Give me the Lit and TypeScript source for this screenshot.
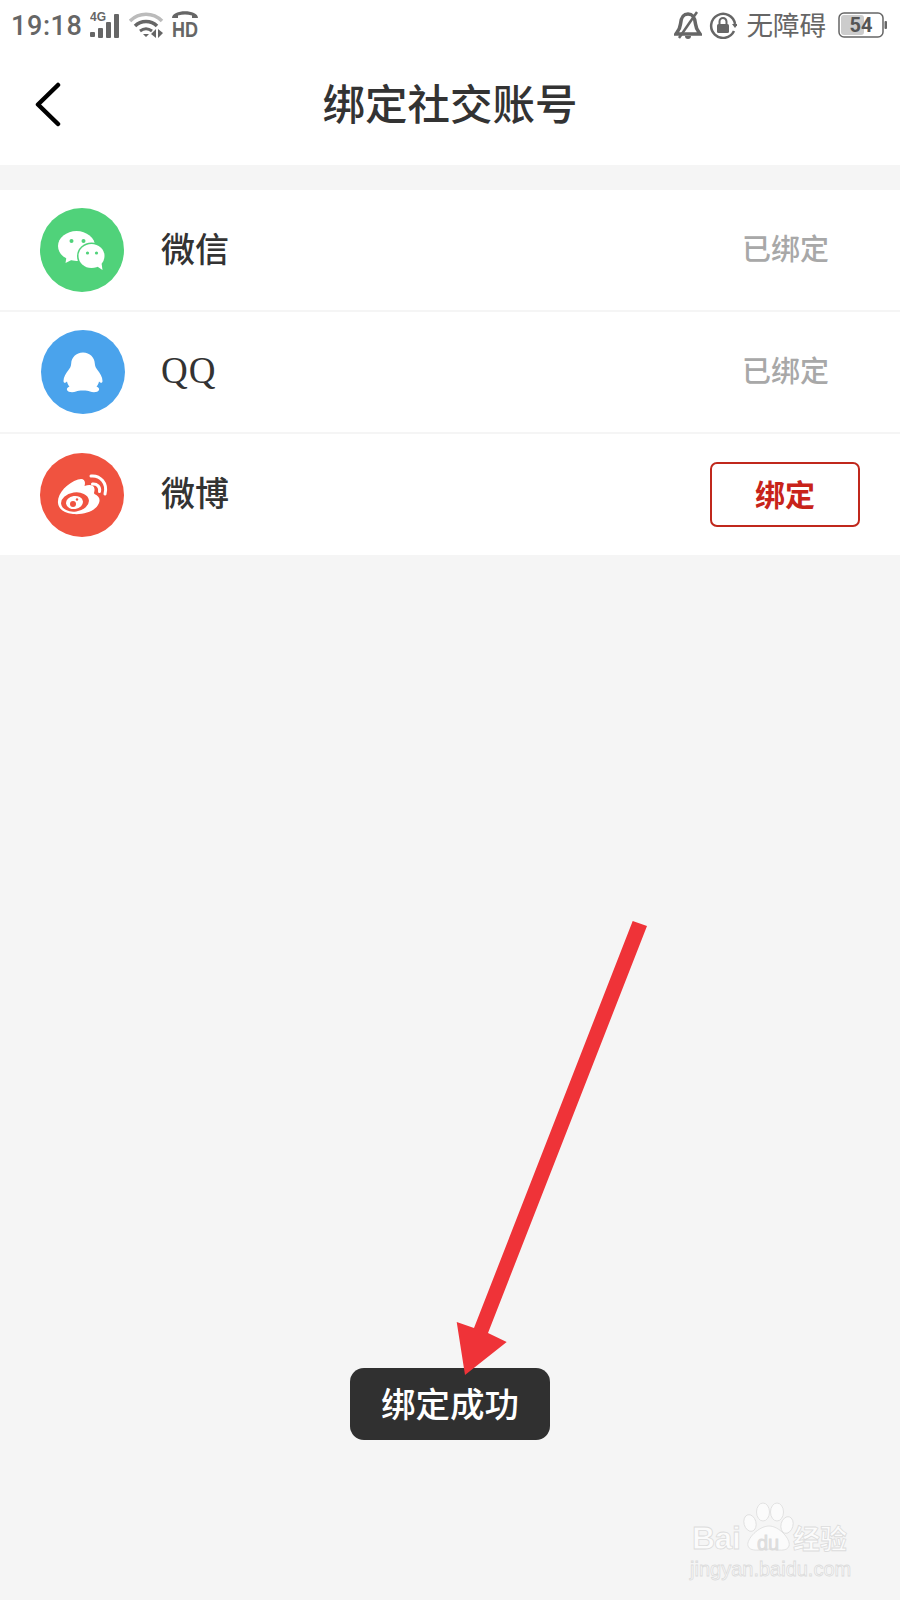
import { LitElement, html, css, svg } from "lit";
import { customElement } from "lit/decorators.js";

const wechat = svg`<svg class="ic" viewBox="0 0 84 84"><circle cx="42" cy="42" r="42" fill="#50d27a"/>
<g transform="translate(1.500 0)"><ellipse cx="35" cy="38" rx="18.500" ry="15" fill="#fff"/><path d="M25 49l-1 6 8-4z" fill="#fff"/>
<circle cx="30" cy="33" r="2" fill="#50d27a"/><circle cx="42" cy="33" r="2" fill="#50d27a"/>
<ellipse cx="50" cy="48" rx="14.500" ry="13.500" fill="#50d27a"/><ellipse cx="50" cy="48" rx="13" ry="12" fill="#fff"/>
<path d="M55 58l6 4-1-7z" fill="#fff"/><circle cx="46" cy="45" r="1.600" fill="#50d27a"/><circle cx="55" cy="45" r="1.600" fill="#50d27a"/></g></svg>`;

const qq = svg`<svg class="ic qq" viewBox="0 0 84 84"><circle cx="42" cy="42" r="42" fill="#4aa3ec"/>
<path d="M42 22.500C49 22.500 53.500 27.500 53.800 33.500C54 36.500 55 38 56.500 40C59 43 61.500 47 61.500 51C61.500 53 60 53.500 58 51.500C57.500 54 56.500 55.500 55.500 56.500C57.500 57.500 58.500 58.500 58 60C57 62.500 52 62.800 49 61.500C47 60.800 45.500 60.500 42 60.500C38.500 60.500 37 60.800 35 61.500C32 62.800 27 62.500 26 60C25.500 58.500 26.500 57.500 28.500 56.500C27.500 55.500 26.500 54 26 51.500C24 53.500 22.500 53 22.500 51C22.500 47 25 43 27.500 40C29 38 30 36.500 30.200 33.500C30.500 27.500 35 22.500 42 22.500Z" fill="#fff"/></svg>`;

const weibo = svg`<svg class="ic" viewBox="0 0 84 84"><circle cx="42" cy="42" r="42" fill="#f05340"/>
<path d="M18 50C17 41 27 30 38 26.500C44 24.500 46 28 44.500 33C50 31 55 32 54.500 37C54.500 39 53.500 40 54.500 41C59 43 60.500 46 59 50C56 58 44 62 33 61C24 60 18.500 56 18 50Z" fill="#fff"/>
<ellipse cx="35" cy="49" rx="14" ry="9.500" fill="#f05340" transform="rotate(-8 35 49)"/>
<ellipse cx="34.500" cy="49.500" rx="8.500" ry="6.500" fill="#fff" transform="rotate(-8 34.500 49.500)"/>
<circle cx="33" cy="51" r="3" fill="#f05340"/><circle cx="37" cy="46.500" r="1.200" fill="#f05340"/>
<path d="M51 23C60 22 68 30 65 41M52.500 31C57 30.500 60.500 34 59.500 38.500" fill="none" stroke="#fff" stroke-width="3" stroke-linecap="round"/></svg>`;

@customElement("app-root")
export class AppRoot extends LitElement {
  static styles = css`
    :host { display: block; width: 900px; height: 1600px; position: relative; background: #f5f5f5; overflow: hidden; font-family: "Noto Sans CJK SC", sans-serif; }
    .status { height: 50px; background: #fff; display: flex; align-items: center; padding: 0 12px 0 11px; box-sizing: border-box; color: #666; }
    .time { font: 500 27px/1 Roboto, sans-serif; letter-spacing: 0.6px; margin-right: 7px; padding-top: 2px; }
    .sig { width: 32px; height: 28px; margin-right: 7px; }
    .wifi { width: 36px; height: 28px; margin-right: 6px; }
    .hd { width: 28px; height: 28px; }
    .spacer { flex: 1; }
    .bell { width: 28px; height: 28px; margin-right: 7px; }
    .lock { width: 28px; height: 28px; margin-right: 10px; }
    .acc { font: 400 26.500px/1 "Noto Sans CJK SC", sans-serif; margin-right: 12px; padding-bottom: 1px; }
    .batt { width: 50px; height: 26px; }
    .nav { height: 115px; background: #fff; display: flex; align-items: center; justify-content: center; position: relative; margin-bottom: 25px; }
    .back { position: absolute; left: 32px; top: 31px; width: 30px; height: 46px; }
    .title { font-size: 42.500px; font-weight: 500; color: #333; line-height: 1; margin-top: -10px; }
    .row { height: 120px; background: #fff; display: flex; align-items: center; padding: 0 40px; margin-bottom: 2px; }
    .row:last-child { margin-bottom: 0; height: 121px; }
    .ic { width: 84px; height: 84px; flex: none; }
    .ic.qq { margin-left: 1px; margin-right: -1px; }
    .name { flex: 1; margin-left: 37px; font-size: 34px; font-weight: 500; color: #333; padding-bottom: 6px; }
    .name.latin { font-family: "Liberation Serif", serif; font-weight: 400; font-size: 37px; letter-spacing: 1px; padding-bottom: 4px; }
    .state { font-size: 29px; color: #a8a8a8; margin-right: 31px; font-weight: 500; padding-bottom: 6px; }
    .btn { width: 150px; height: 65px; box-sizing: border-box; border: 2.500px solid #c0281c; border-radius: 7px; display: flex; align-items: center; justify-content: center; color: #c8231a; font-size: 30px; font-weight: 700; padding-bottom: 3px; }
    .toast { position: absolute; left: 350px; top: 1368px; width: 200px; height: 72px; border-radius: 14px; background: #303030; color: #fff; display: flex; align-items: center; justify-content: center; font-size: 34.500px; font-weight: 500; padding-bottom: 5px; box-sizing: border-box; }
    .arrow { position: absolute; left: 0; top: 0; width: 900px; height: 1600px; pointer-events: none; }
    .wm { position: absolute; left: 688px; top: 1500px; width: 170px; height: 90px; color: #fbfbfb; }
    .wm svg { position: absolute; left: 0; top: 0; width: 170px; height: 90px; }
    .wm span { position: absolute; white-space: nowrap; -webkit-text-stroke: 0.800px #dcdcdc; line-height: 1; }
    .bai { left: 4px; top: 22px; font: 700 32px/1 "Liberation Sans", sans-serif; letter-spacing: -0.500px; }
    .du { left: 69px; top: 33px; font: 400 20px/1 "Liberation Sans", sans-serif; color: #e0e0e0; }
    .jy { left: 105px; top: 24px; font: 700 27px/1 "Noto Sans CJK SC", sans-serif; }
    .url { left: 2px; top: 59px; font: 400 20px/1 "Liberation Sans", sans-serif; }
  `;

  render() {
    return html`
      <div class="status">
        <span class="time">19:18</span>
        <svg class="sig" viewBox="0 0 32 28"><text x="0" y="10" font-size="12" font-weight="700" font-family="Liberation Sans" fill="#666">4G</text>
          <rect x="0" y="21" width="5" height="5" rx="1" fill="#666"/><rect x="8" y="17" width="5" height="10" rx="1" fill="#666"/><rect x="16" y="11" width="5" height="16" rx="1" fill="#666"/><rect x="24" y="3" width="5" height="24" rx="1" fill="#666"/></svg>
        <svg class="wifi" viewBox="0 0 36 28"><path d="M1 10C10 1 24 1 33 10" fill="none" stroke="#bbb" stroke-width="3.500"/><path d="M6 15C12 9 22 9 28 15" fill="none" stroke="#666" stroke-width="3.500"/><path d="M11 20C15 17 19 17 23 20" fill="none" stroke="#666" stroke-width="3"/><path d="M14 23h6l-3 3zM27 27v-9l-5 5zM29 18v9l5-5z" fill="#666"/></svg>
        <svg class="hd" viewBox="0 0 28 28"><path d="M1 7C1 -2 27 -2 27 7L21 7V4.500C16 3 12 3 7 4.500V7Z" fill="#666"/><text x="1" y="26" font-size="22" font-weight="700" font-family="Liberation Sans" fill="#666" textLength="26" lengthAdjust="spacingAndGlyphs">HD</text></svg>
        <span class="spacer"></span>
        <svg class="bell" viewBox="0 0 28 28"><path d="M14 3C8 3 7 8 6.500 13C6 18 4 20 2 23H26C24 20 22 18 21.500 13C21 8 20 3 14 3Z" fill="none" stroke="#666" stroke-width="3.500"/><path d="M11 25a3 3 0 0 0 6 0z" fill="#666"/><path d="M23 1L5 27" stroke="#666" stroke-width="2.500"/></svg>
        <svg class="lock" viewBox="0 0 28 28"><path d="M25 20A12 12 0 1 1 26 13" fill="none" stroke="#666" stroke-width="2.500"/><path d="M23 13h6l-3 4z" fill="#666"/><rect x="8" y="13" width="12" height="9" rx="1.500" fill="#666"/><path d="M10.500 13V10.500a3.500 3.500 0 0 1 7 0V13" fill="none" stroke="#666" stroke-width="2"/></svg>
        <span class="acc">无障碍</span>
        <svg class="batt" viewBox="0 0 50 26"><rect x="1" y="1" width="44" height="24" rx="5" fill="#fff" stroke="#666" stroke-width="1.500"/><rect x="3" y="3" width="23" height="20" rx="3" fill="#ccc"/><rect x="46.500" y="9" width="2.500" height="8" rx="1" fill="#666"/><text x="23" y="20" text-anchor="middle" font-size="20" font-weight="700" font-family="Roboto" fill="#555">54</text></svg>
      </div>
      <div class="nav">
        <svg class="back" viewBox="0 0 30 46"><path d="M26 4L6 23.500L26 43" fill="none" stroke="#000" stroke-width="4.500" stroke-linecap="round" stroke-linejoin="round"/></svg>
        <div class="title">绑定社交账号</div>
      </div>
      <div class="list">
        <div class="row">${wechat}<span class="name">微信</span><span class="state">已绑定</span></div>
        <div class="row">${qq}<span class="name latin">QQ</span><span class="state">已绑定</span></div>
        <div class="row">${weibo}<span class="name">微博</span><div class="btn">绑定</div></div>
      </div>
      <div class="wm">
        <svg viewBox="0 0 170 90"><g fill="#fbfbfb" stroke="#dcdcdc" stroke-width="0.800"><ellipse cx="62" cy="23" rx="6" ry="8.500" transform="rotate(-15 62 23)"/><ellipse cx="75" cy="12" rx="6.500" ry="9"/><ellipse cx="89" cy="12" rx="6.500" ry="9"/><ellipse cx="99" cy="25" rx="6" ry="8.500" transform="rotate(15 99 25)"/><path d="M81 26C91 26 103 39 101 46C99 52 90 50 81 49C72 50 62 52 60 46C58 39 71 26 81 26Z"/></g></svg>
        <span class="bai">Bai</span><span class="du">du</span><span class="jy">经验</span><span class="url">jingyan.baidu.com</span>
      </div>
      <div class="toast">绑定成功</div>
      <svg class="arrow" viewBox="0 0 900 1600"><path d="M632.700 921L647 926L488 1333L506.700 1342L465 1375L456.700 1322L474 1328Z" fill="#ef3338"/></svg>
    `;
  }
}
